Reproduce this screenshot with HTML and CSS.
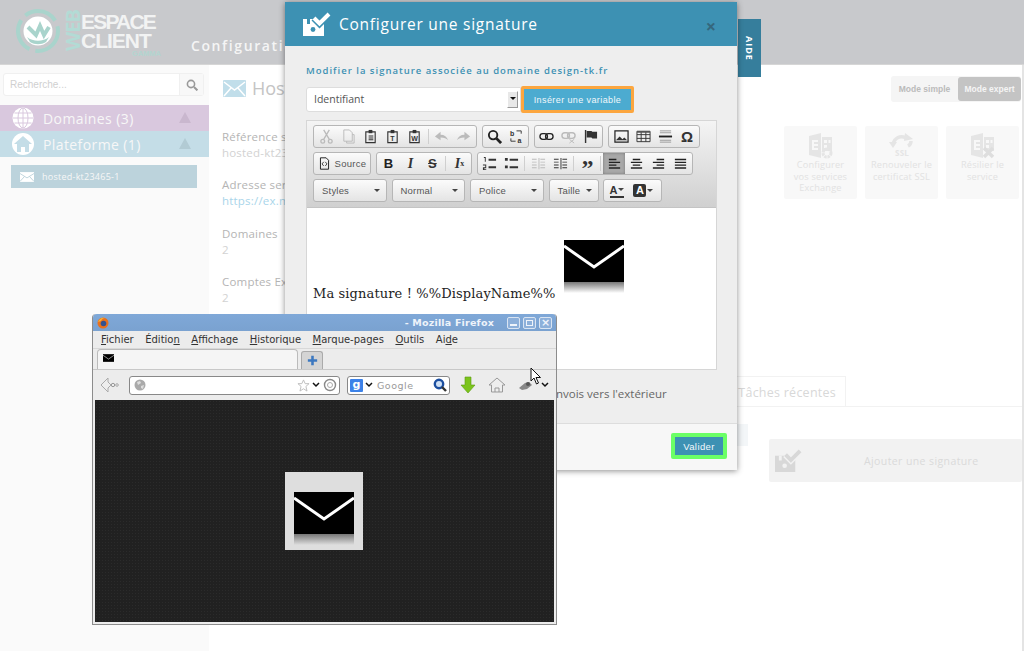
FILE: index.html
```html
<!DOCTYPE html>
<html lang="fr">
<head>
    <meta charset="UTF-8">
    <title>Espace Client</title>
    <link rel="stylesheet" href="styles.css">
</head>
<body>
    <!-- Icones reutilisees -->
    <svg class="sprite" width="0" height="0">
        <symbol id="i-mail" viewBox="0 0 60 42"><path fill="currentColor" d="M0 0h60v42H0z"/><path fill="none" stroke="#fff" stroke-width="3" d="M0 6l30 21L60 6"/></symbol>
        <symbol id="i-sign" viewBox="0 0 28 24"><path fill="currentColor" d="M0 7h17l4 4v13H0z"/><path fill="var(--hole,#fff)" d="M4 7h3v5H4z"/><circle cx="10" cy="17.500" r="2.400" fill="var(--hole,#fff)"/><path fill="none" stroke="var(--hole,#fff)" stroke-width="7" d="M11 6l5.500 5.500L26 2"/><path fill="none" stroke="currentColor" stroke-width="4" d="M11 6l5.500 5.500L26 2"/></symbol>
        <symbol id="i-clip" viewBox="0 0 16 16"><path fill="none" stroke="#333" stroke-width="1.200" d="M3 3h10v11.500H3z"/><path fill="#333" d="M6 1h4v3.500H6z"/></symbol>
        <symbol id="i-list" viewBox="0 0 16 16"><path fill="#333" d="M6 3h9v2H6zM6 11h9v2H6z"/><path fill="#333" d="M1 2h3v3H1zM1 10h3v3H1z"/></symbol>
        <symbol id="i-indent" viewBox="0 0 16 16"><path fill="currentColor" d="M1 3h5v1H1zM1 6h5v1H1zM1 9h5v1H1zM1 12h5v1H1zM10 3h5v1h-5zM10 6h5v1h-5zM10 9h5v1h-5zM10 12h5v1h-5zM8 2h1v12H8z"/></symbol>
        <symbol id="i-ex" viewBox="0 0 26 26"><path fill="currentColor" d="M1 3l12-3v25L1 22zM14 4h10v14H14z"/><path fill="#f8f8f8" d="M4 7h6v2H6v2h4v2H6v2h4v2H4zM16 7h3v3h-3zM20.500 7h2v3h-2zM16 12h3v3h-3z"/></symbol>
    </svg>

    <div class="page">
        <header class="topbar">
            <div class="logo">
                <svg width="46" height="46" viewBox="0 0 46 46">
                    <circle cx="23" cy="23" r="20" fill="none" stroke="#a9d4cc" stroke-width="4" stroke-dasharray="34 6"/>
                    <circle cx="23" cy="23" r="14.500" fill="#fff"/>
                    <path fill="none" stroke="#a9d4cc" stroke-width="4" d="M13 19l8 8 4-9 4 9 5-8"/>
                    <path fill="#a9d4cc" d="M12 29c6 5 16 5 22 0l-3 5c-5 3-11 3-16 0z"/>
                </svg>
                <span class="logo-web">WEB</span>
                <div class="logo-name">
                    <span class="logo-first">ESPACE</span>
                    <span>CLIENT</span>
                    <small>GAMMA</small>
                </div>
            </div>
            <div class="topbar-title">Configuration</div>
        </header>

        <div class="layout">
            <aside class="sidebar">
                <div class="search">
                    <span class="search-text">Recherche...</span>
                    <span class="search-btn">
                        <svg width="12" height="12" viewBox="0 0 12 12"><circle cx="5" cy="5" r="3.600" fill="none" stroke="#999" stroke-width="1.600"/><path stroke="#999" stroke-width="2" d="M8 8l3.400 3.400"/></svg>
                    </span>
                </div>
                <div class="nav-row nav-purple">
                    <svg width="22" height="22" viewBox="0 0 22 22"><circle cx="11" cy="11" r="10.500" fill="#fff"/><g fill="none" stroke="#d9c8de"><ellipse cx="11" cy="11" rx="5" ry="10"/><path d="M11 1v20M1 11h20M2.500 6h17M2.500 16h17"/></g></svg>
                    <span class="nav-label">Domaines (3)</span>
                    <span class="nav-arrow"></span>
                </div>
                <div class="nav-row nav-blue">
                    <svg width="22" height="22" viewBox="0 0 22 22"><circle cx="11" cy="11" r="11" fill="#fff"/><path fill="#c4dde7" d="M11 3L2 11h3v8h4v-5h4v5h4v-8h3z"/></svg>
                    <span class="nav-label">Plateforme (1)</span>
                    <span class="nav-arrow"></span>
                </div>
                <div class="nav-item">
                    <svg class="nav-item-icon" viewBox="0 0 60 42"><path fill="#fff" d="M0 0h60v42H0z"/><path fill="none" stroke="#bcd3dc" stroke-width="4" d="M0 6l30 19L60 6M0 40l20-22M60 40L40 18"/></svg>
                    hosted-kt23465-1
                </div>
            </aside>

            <main class="content">
                <section class="info">
                    <h2 class="info-title">
                        <svg class="info-icon" viewBox="0 0 23 17"><rect width="23" height="17" rx="1" fill="#c1deea"/><path fill="none" stroke="#fff" stroke-width="1.500" d="M1 2l10.500 8L22 2M1 16l7-8M22 16l-7-8"/></svg>
                        Hosted
                    </h2>
                    <dl class="info-list">
                        <dt>Référence service</dt>
                        <dd>hosted-kt23465-1</dd>
                        <dt>Adresse serveur</dt>
                        <dd class="info-link">https://ex.mail.fr</dd>
                        <dt>Domaines</dt>
                        <dd>2</dd>
                        <dt>Comptes Exchange</dt>
                        <dd>2</dd>
                    </dl>
                    <div class="info-row">
                        <span>Non</span>
                        <i class="info-dot"></i>
                    </div>
                </section>

                <section class="tools">
                    <div class="mode-switch">
                        <span class="mode">Mode simple</span>
                        <span class="mode mode-on">Mode expert</span>
                    </div>
                    <div class="tiles">
                        <div class="tile">
                            <svg class="tile-icon" viewBox="0 0 26 26"><use href="#i-ex"/><circle cx="19" cy="20" r="4" fill="none" stroke="#e5e5e5" stroke-width="3" stroke-dasharray="2.500 .7"/></svg>
                            Configurer<br>vos services<br>Exchange
                        </div>
                        <div class="tile">
                            <svg class="tile-icon" viewBox="0 0 26 26"><path fill="none" stroke="currentColor" stroke-width="3.500" d="M4 12C5 5 11 2 17 5M22 8c0 2-1 4-3 5"/><path fill="currentColor" d="M16 0l8 6-9 2zM0 9h8l-4 6z"/><text x="13" y="23" text-anchor="middle" class="tile-ssl">SSL</text></svg>
                            Renouveler le<br>certificat SSL
                        </div>
                        <div class="tile">
                            <svg class="tile-icon" viewBox="0 0 26 26"><use href="#i-ex"/><path stroke="#dedede" stroke-width="3.500" d="M14 15l9 9M23 15l-9 9"/></svg>
                            Résilier le<br>service
                        </div>
                    </div>
                    <div class="tabs"><span class="tab">Tâches récentes</span></div>
                    <div class="add-row">
                        <span class="add-stub"></span>
                        <div class="add-btn">
                            <svg class="add-icon"><use href="#i-sign"/></svg>
                            <span class="add-text">Ajouter une signature</span>
                        </div>
                    </div>
                </section>
            </main>
        </div>
    </div>

    <div class="aide"><span>AIDE</span></div>

    <!-- Fenetre de configuration -->
    <div class="modal">
        <div class="modal-head">
            <svg class="modal-icon"><use href="#i-sign"/></svg>
            <span class="modal-title">Configurer une signature</span>
            <span class="modal-close">×</span>
        </div>
        <div class="modal-body">
            <h4 class="modal-sub">Modifier la signature associée au domaine design-tk.fr</h4>
            <div class="var-row">
                <div class="select">Identifiant<span class="select-arrow"></span></div>
                <button class="btn btn-orange">Insérer une variable</button>
            </div>
            <div class="editor">
                <div class="toolbar">
                    <div class="tb-row">
                        <div class="tb-group tb-group-wide">
                            <span class="tb off"><svg viewBox="0 0 16 16"><circle cx="4" cy="13" r="2" fill="none" stroke="currentColor" stroke-width="1.400"/><circle cx="12" cy="13" r="2" fill="none" stroke="currentColor" stroke-width="1.400"/><path stroke="currentColor" stroke-width="1.400" d="M5 11l6-10M11 11L5 1"/></svg></span>
                            <span class="tb off"><svg viewBox="0 0 16 16"><path fill="none" stroke="currentColor" d="M3 1h6l3 3v9H3zM6 13v2h8V6h-2"/></svg></span>
                            <span class="tb"><svg viewBox="0 0 16 16"><use href="#i-clip"/><path fill="#333" d="M6 7h5v1H6zM6 9h5v1H6zM6 11h5v1H6z"/></svg></span>
                            <span class="tb"><svg viewBox="0 0 16 16"><use href="#i-clip"/><text x="8" y="13" text-anchor="middle" class="tb-mini">T</text></svg></span>
                            <span class="tb"><svg viewBox="0 0 16 16"><use href="#i-clip"/><text x="8" y="13" text-anchor="middle" class="tb-mini">W</text></svg></span>
                            <i class="tb-sep"></i>
                            <span class="tb off"><svg viewBox="0 0 16 16"><path fill="currentColor" d="M1 8l6-5v3c4 0 7 2 8 6-2-2-4-3-8-3v3z"/></svg></span>
                            <span class="tb off"><svg viewBox="0 0 16 16"><path fill="currentColor" d="M15 8L9 3v3C5 6 2 8 1 12c2-2 4-3 8-3v3z"/></svg></span>
                        </div>
                        <div class="tb-group tb-pad-half">
                            <span class="tb"><svg viewBox="0 0 16 16"><circle cx="6.500" cy="6.500" r="4.500" fill="none" stroke="#222" stroke-width="2"/><path stroke="#222" stroke-width="3" d="M10 10l5 5"/></svg></span>
                            <span class="tb"><svg viewBox="0 0 16 16"><text x="1" y="7" class="tb-mini">b</text><text x="9" y="15" class="tb-mini">a</text><path fill="none" stroke="#333" d="M8 2h5v3M7 13H2v-3"/></svg></span>
                        </div>
                        <div class="tb-group tb-pad-half">
                            <span class="tb"><svg viewBox="0 0 16 16"><rect x="1" y="5" width="8" height="6" rx="3" fill="none" stroke="#222" stroke-width="1.400"/><rect x="7" y="5" width="8" height="6" rx="3" fill="none" stroke="#222" stroke-width="1.400"/></svg></span>
                            <span class="tb off"><svg viewBox="0 0 16 16"><rect x="1" y="4" width="8" height="6" rx="3" fill="none" stroke="currentColor" stroke-width="1.500"/><rect x="7" y="4" width="8" height="6" rx="3" fill="none" stroke="currentColor" stroke-width="1.500"/><path stroke="currentColor" d="M9 11l5 4M14 11l-5 4"/></svg></span>
                            <span class="tb"><svg viewBox="0 0 16 16"><path fill="#333" d="M2 1h1.500v14H2zM4 2h5l1 1h5v7h-5l-1-1H4z"/></svg></span>
                        </div>
                        <div class="tb-group tb-pad-one">
                            <span class="tb"><svg viewBox="0 0 16 16"><path fill="none" stroke="#222" stroke-width="1.300" d="M1 2h14v12H1z"/><path fill="#333" d="M2 12l4-4 3 3 2-2 3 3z"/></svg></span>
                            <span class="tb"><svg viewBox="0 0 16 16"><path fill="none" stroke="#333" d="M1 2.500h14v11H1zM1 6h14M1 10h14M5.500 2.500v11M10.500 2.500v11"/><path fill="#555" d="M1 2h14v2H1z"/></svg></span>
                            <span class="tb"><svg viewBox="0 0 16 16"><path stroke="#999" d="M2 2h12M2 4h12M2 12h12M2 14h12"/><path stroke="#222" stroke-width="2" d="M1 8h14"/></svg></span>
                            <span class="tb tb-text tb-omega">Ω</span>
                        </div>
                    </div>
                    <div class="tb-row">
                        <div class="tb-group tb-pad-half">
                            <span class="tb tb-source"><svg viewBox="0 0 16 16"><path fill="none" stroke="#222" stroke-width="1.200" d="M3 1h7l3 3v11H3z"/><path fill="none" stroke="#222" d="M7 6L5 8.500 7 11M9 6l2 2.500L9 11"/></svg>Source</span>
                        </div>
                        <div class="tb-group tb-pad-half">
                            <span class="tb tb-text tb-b">B</span>
                            <span class="tb tb-text tb-i">I</span>
                            <span class="tb tb-text tb-s">S</span>
                            <i class="tb-sep"></i>
                            <span class="tb tb-text tb-i">I<sub>x</sub></span>
                        </div>
                        <div class="tb-group tb-pad-half">
                            <span class="tb"><svg viewBox="0 0 16 16"><path fill="#333" d="M7 3h8v2H7zM7 11h8v2H7zM2 1h2v5H3V2H2zM1 9h3.500v4H2.500v1h2v1H1v-3h2.500v-2H1z"/></svg></span>
                            <span class="tb"><svg><use href="#i-list"/></svg></span>
                            <i class="tb-sep"></i>
                            <span class="tb off"><svg><use href="#i-indent"/></svg></span>
                            <span class="tb"><svg><use href="#i-indent"/></svg></span>
                            <i class="tb-sep"></i>
                            <span class="tb tb-text tb-quote">”</span>
                            <i class="tb-sep"></i>
                            <span class="tb tb-on"><svg viewBox="0 0 16 16"><path fill="#222" d="M2 3h8v1.500H2zM2 6h12v1.500H2zM2 9h8v1.500H2zM2 12h12v1.500H2z"/></svg></span>
                            <span class="tb"><svg viewBox="0 0 16 16"><path fill="#222" d="M4 3h8v1.500H4zM2 6h12v1.500H2zM4 9h8v1.500H4zM2 12h12v1.500H2z"/></svg></span>
                            <span class="tb"><svg viewBox="0 0 16 16"><path fill="#222" d="M6 3h8v1.500H6zM2 6h12v1.500H2zM6 9h8v1.500H6zM2 12h12v1.500H2z"/></svg></span>
                            <span class="tb"><svg viewBox="0 0 16 16"><path fill="#222" d="M2 3h12v1.500H2zM2 6h12v1.500H2zM2 9h12v1.500H2zM2 12h12v1.500H2z"/></svg></span>
                        </div>
                    </div>
                    <div class="tb-row">
                        <div class="tb-combo tb-combo-lg">Styles<i class="caret"></i></div>
                        <div class="tb-combo tb-combo-lg">Normal<i class="caret"></i></div>
                        <div class="tb-combo tb-combo-lg">Police<i class="caret"></i></div>
                        <div class="tb-combo tb-combo-sm">Taille<i class="caret"></i></div>
                        <div class="tb-group tb-colors">
                            <span class="tb-color tb-color-a">A<i class="caret"></i></span>
                            <span class="tb-color"><b class="tb-color-box">A</b><i class="caret"></i></span>
                        </div>
                    </div>
                </div>
                <div class="editor-text">
                    <span>Ma signature ! %%DisplayName%%</span>
                    <div class="sig-img">
                        <svg class="sig-mail"><use href="#i-mail"/></svg>
                        <i class="sig-shadow"></i>
                    </div>
                </div>
            </div>
            <div class="check-row">Ajouter la signature aux envois vers l'extérieur</div>
        </div>
        <div class="modal-foot">
            <button class="btn btn-green">Valider</button>
        </div>
    </div>

    <!-- Fenetre Firefox -->
    <div class="ff">
        <div class="ff-title">
            <svg class="ff-logo" viewBox="0 0 12 12"><circle cx="6" cy="6" r="5.500" fill="#e8701e"/><circle cx="6.500" cy="6.500" r="2.800" fill="#33518f"/><path fill="#f3b23c" d="M1 5c1-3 4-5 7-4-2 0-3 1-4 3z"/></svg>
            <span class="ff-name">- Mozilla Firefox</span>
            <div class="ff-btns">
                <span class="ff-btn"><i class="ff-min"></i></span>
                <span class="ff-btn"><i class="ff-max"></i></span>
                <span class="ff-btn ff-x">×</span>
            </div>
        </div>
        <div class="ff-menu">
            <span><u>F</u>ichier</span>
            <span>Éditio<u>n</u></span>
            <span><u>A</u>ffichage</span>
            <span><u>H</u>istorique</span>
            <span><u>M</u>arque-pages</span>
            <span><u>O</u>utils</span>
            <span>Ai<u>d</u>e</span>
        </div>
        <div class="ff-tabs">
            <div class="ff-tab"><svg class="ff-fav"><use href="#i-mail"/></svg></div>
            <div class="ff-new"><svg width="11" height="11" viewBox="0 0 13 13"><path fill="#3c78c0" d="M5 1h3v4h4v3H8v4H5V8H1V5h4z"/></svg></div>
        </div>
        <div class="ff-nav">
            <svg class="ff-back" viewBox="0 0 19 16"><path fill="#eee" stroke="#aaa" d="M8 1L1 8l7 7v-4l3-3-3-3z"/><circle cx="13" cy="8" r="1.700" fill="none" stroke="#999"/><circle cx="17" cy="8" r="1.300" fill="none" stroke="#aaa"/></svg>
            <div class="ff-url">
                <svg class="ff-globe" viewBox="0 0 12 12"><circle cx="6" cy="6" r="5.500" fill="#aaa"/><path fill="#ddd" d="M3 3l3-1 1 2-3 2zM7 7l3-1-1 4-2-1z"/></svg>
                <span class="ff-grow"></span>
                <svg class="ff-star" viewBox="0 0 14 14"><path fill="#fff" stroke="#bbb" d="M7 1l1.800 4H13l-3.400 3 1.200 5L7 10.500 3.200 13l1.200-5L1 5h4.200z"/></svg>
                <svg class="ff-chev" viewBox="0 0 8 6"><path fill="none" stroke="#111" stroke-width="1.500" d="M1 1l3 3 3-3"/></svg>
                <svg class="ff-reload" viewBox="0 0 14 14"><circle cx="7" cy="7" r="5.500" fill="none" stroke="#888" stroke-width="1.400"/><circle cx="7" cy="7" r="2.500" fill="none" stroke="#aaa"/></svg>
            </div>
            <div class="ff-search">
                <span class="ff-g">g</span>
                <svg class="ff-chev" viewBox="0 0 8 6"><path fill="none" stroke="#111" stroke-width="1.500" d="M1 1l3 3 3-3"/></svg>
                <span class="ff-search-text">Google</span>
                <svg class="ff-lens" viewBox="0 0 14 14"><circle cx="6" cy="6" r="4.200" fill="#cfe0f5" stroke="#1c4fa0" stroke-width="2.400"/><path stroke="#333" stroke-width="2.400" d="M9 9l4 4"/></svg>
            </div>
            <svg class="ff-down" viewBox="0 0 16 18"><path fill="#7cc41c" stroke="#5a9c10" stroke-width=".6" d="M5 1h6v8h4l-7 8-7-8h4z"/></svg>
            <svg class="ff-home" viewBox="0 0 18 16"><path fill="#eee" stroke="#999" d="M9 1L1 8h2.500v7h11V8H17z"/><path fill="none" stroke="#999" d="M7 15v-4h4v4"/></svg>
            <svg class="ff-tools" viewBox="0 0 32 12"><path fill="#888" d="M1 9l6-5 4-1 3 3-5 4-5 1z"/><circle cx="10" cy="5" r="2" fill="#555"/><path fill="none" stroke="#111" stroke-width="1.500" d="M24 4l3 3 3-3"/></svg>
        </div>
        <div class="ff-view">
            <div class="ff-img">
                <svg class="sig-mail"><use href="#i-mail"/></svg>
                <i class="sig-shadow"></i>
            </div>
        </div>
    </div>

    <svg class="cursor" viewBox="0 0 12 18"><path fill="#fff" stroke="#111" d="M1 1v13l3-3 2.500 6 2-1-2.500-5.500h4.500z"/></svg>
</body>
</html>
```

FILE: styles.css
```css
* {
    margin: 0;
    padding: 0;
    box-sizing: border-box;
}

body {
    font-family: "Open Sans", sans-serif;
    background-color: #ffffff;
    width: 1024px;
    height: 651px;
    overflow: hidden;
    position: relative;
}

.sprite {
    position: absolute;
}

.page {
    height: 651px;
    display: flex;
    flex-direction: column;
    border-right: 2px solid #e4e4e4;
}

/* Bandeau du haut */
.topbar {
    height: 65px;
    flex: none;
    background-color: #c8c9cc;
    border-bottom: 1px solid #d6d6d6;
    display: flex;
    padding: 8px 0 0 15px;
    margin-right: -2px;
}

.logo {
    width: 176px;
    display: flex;
    color: #f2f3f3;
}

.logo-web {
    writing-mode: vertical-rl;
    transform: rotate(180deg);
    font-size: 20px;
    line-height: 18px;
    font-weight: 700;
    color: #b3dbd5;
    height: 38px;
    margin: 5px 0 0 3px;
    letter-spacing: -1px;
    text-align: center;
}

.logo-name {
    display: flex;
    flex-direction: column;
    font-family: "Liberation Sans", sans-serif;
    font-weight: 700;
    font-size: 21px;
    line-height: 19px;
    letter-spacing: -1px;
    margin: 4px 0 0 -1px;
}

.logo-first {
    letter-spacing: -1.800px;
}

.logo-name small {
    font-size: 7.500px;
    line-height: 8px;
    letter-spacing: 0;
    color: #b3d5d0;
    text-align: right;
    margin-right: -6px;
}

.topbar-title {
    align-self: flex-end;
    font-size: 14px;
    font-weight: 600;
    letter-spacing: 1.600px;
    color: #f5f5f5;
    padding-bottom: 9px;
}

.layout {
    flex: 1;
    display: flex;
    min-height: 0;
}

/* Colonne de gauche */
.sidebar {
    width: 209px;
    flex: none;
    background-color: #fafafa;
    padding-top: 8px;
}

.search {
    display: flex;
    height: 23px;
    margin: 0 5px 9px 3px;
    background-color: #ffffff;
    border: 1px solid #f0f0f0;
    border-radius: 3px;
}

.search-text {
    flex: 1;
    font-size: 10px;
    line-height: 21px;
    padding-left: 6px;
    color: #d0d0d0;
    font-family: "Liberation Sans", sans-serif;
}

.search-btn {
    width: 24px;
    background-color: #f8f8f8;
    border-left: 1px solid #f0f0f0;
    display: flex;
    align-items: center;
    justify-content: center;
}

.nav-row {
    height: 26px;
    display: flex;
    align-items: center;
    padding: 0 18px 0 12px;
    color: #f7f7f7;
    font-size: 14px;
    letter-spacing: .4px;
}

.nav-purple {
    background-color: #d9c8de;
}

.nav-blue {
    background-color: #c4dde7;
}

.nav-label {
    flex: 1;
    margin-left: 9px;
}

.nav-arrow {
    border: 6px solid transparent;
    border-top-width: 0;
    border-bottom: 11px solid #c9b7ce;
    margin-top: -2px;
}

.nav-blue .nav-arrow {
    border-bottom-color: #b2cbd4;
}

.nav-item {
    height: 23px;
    margin: 8px 12px 0 11px;
    background-color: #bcd3dc;
    color: #f7f7f7;
    font-size: 9px;
    letter-spacing: .25px;
    display: flex;
    align-items: center;
    gap: 8px;
    padding-left: 9px;
}

.nav-item-icon {
    width: 14px;
    height: 10px;
}

/* Contenu principal */
.content {
    flex: 1;
    display: flex;
    min-width: 0;
}

.info {
    width: 528px;
    flex: none;
    padding: 13px 0 0 13px;
    overflow: hidden;
    white-space: nowrap;
}

.info-title {
    font-size: 18px;
    font-weight: 400;
    color: #c4c4c4;
    display: flex;
    align-items: center;
    gap: 6px;
    height: 20px;
    margin-left: 1px;
}

.info-icon {
    width: 23px;
    height: 17px;
}

.info-list {
    margin-top: 31px;
    font-size: 11.500px;
    line-height: 16px;
    letter-spacing: .2px;
}

.info-list dt {
    color: #b4b4b4;
}

.info-list dd {
    color: #d2d2d2;
    margin-bottom: 16.300px;
}

.info-list .info-link {
    color: #a9d5ea;
}

.info-row {
    margin-top: 143px;
    padding-left: 366px;
    display: flex;
    align-items: center;
    width: 515px;
    font-size: 9px;
    color: #ccc;
}

.info-row span {
    flex: 1;
}

.info-dot {
    width: 3px;
    height: 8px;
    margin-right: 1px;
    background-color: #a9cfe0;
}

.tools {
    flex: 1;
    min-width: 0;
    display: flex;
    flex-direction: column;
}

.mode-switch {
    align-self: flex-end;
    width: 130px;
    height: 26px;
    margin: 11px 1px 0 0;
    background-color: #f5f5f5;
    border-radius: 3px;
    display: flex;
    align-items: center;
    font-family: "Liberation Sans", sans-serif;
    font-size: 8.500px;
    font-weight: 700;
}

.mode {
    flex: 1;
    text-align: center;
    color: #bbb;
}

.mode-on {
    flex: none;
    width: 63px;
    height: 24px;
    line-height: 24px;
    background-color: #c4c4c4;
    color: #f5f5f5;
    border-radius: 3px;
}

.tiles {
    display: flex;
    gap: 8px;
    margin: 24px 0 0 47px;
}

.tile {
    width: 73px;
    height: 73px;
    background-color: #f8f8f8;
    border-radius: 2px;
    color: #e2e2e2;
    font-size: 9.200px;
    line-height: 11.500px;
    letter-spacing: .2px;
    text-align: center;
    padding: 7px 3px 0;
}

.tile-icon {
    display: block;
    width: 26px;
    height: 26px;
    margin: 0 auto;
    color: #e5e5e5;
}

.tile-ssl {
    font-size: 8px;
    font-weight: 700;
    fill: #e5e5e5;
}

.tabs {
    margin-top: 177px;
    height: 31px;
    border-bottom: 1px solid #f2f2f2;
}

.tab {
    display: block;
    width: 109px;
    height: 30px;
    border: 1px solid #f2f2f2;
    border-bottom: 0;
    border-left: 0;
    color: #d8d8d8;
    font-size: 12.500px;
    line-height: 32px;
    letter-spacing: .25px;
    text-align: right;
    padding-right: 9px;
    white-space: nowrap;
}

.add-row {
    display: flex;
    gap: 21px;
    margin-top: 17px;
}

.add-stub {
    width: 11px;
    height: 22px;
    background-color: #f3f6f8;
}

.add-btn {
    flex: 1;
    height: 43px;
    margin-top: 15px;
    background-color: #f2f2f2;
    border-radius: 2px;
    display: flex;
    align-items: center;
    padding-left: 6px;
}

.add-icon {
    width: 27px;
    height: 25px;
    color: #d8d8d8;
    --hole: #f2f2f2;
}

.add-text {
    margin-left: 62px;
    font-size: 10.500px;
    letter-spacing: .4px;
    color: #dadada;
}

/* Onglet lateral */
.aide {
    position: absolute;
    left: 738px;
    top: 19px;
    width: 23px;
    height: 58px;
    background-color: #367e9c;
    color: #ffffff;
    display: flex;
    align-items: center;
    justify-content: center;
}

.aide span {
    writing-mode: vertical-rl;
    font-size: 9px;
    font-weight: 700;
    letter-spacing: 1px;
}

/* Fenetre de configuration */
.modal {
    position: absolute;
    left: 285px;
    top: 2px;
    width: 452px;
    height: 468px;
    background-color: #eeeeee;
    box-shadow: 0 1px 6px rgba(0, 0, 0, .45);
    display: flex;
    flex-direction: column;
}

.modal-head {
    height: 44px;
    flex: none;
    background-color: #3d91b3;
    color: #ffffff;
    display: flex;
    align-items: center;
    padding: 0 21px 0 18px;
    --hole: #3d91b3;
}

.modal-icon {
    width: 28px;
    height: 24px;
}

.modal-title {
    flex: 1;
    margin-left: 8px;
    font-size: 15.500px;
    font-weight: 400;
    letter-spacing: .75px;
}

.modal-close {
    font-size: 18px;
    font-weight: 700;
    color: #35677d;
    margin-top: 3px;
}

.modal-body {
    flex: 1;
    padding: 18px 20px 0 21px;
}

.modal-sub {
    font-size: 9.500px;
    line-height: 14px;
    letter-spacing: 1px;
    font-weight: 600;
    color: #3d91b3;
}

.var-row {
    display: flex;
    margin-top: 8px;
    height: 27px;
    align-items: center;
}

.select {
    width: 215px;
    height: 25px;
    background-color: #ffffff;
    border: 1px solid #dddddd;
    border-radius: 3px 0 0 3px;
    font-size: 10.500px;
    line-height: 23px;
    padding-left: 7px;
    color: #555555;
    position: relative;
}

.select-arrow {
    position: absolute;
    right: 2px;
    top: 3px;
    width: 11px;
    height: 17px;
    background-color: #e8e8e8;
    border: 1px solid #999;
    border-top-color: #fff;
    border-left-color: #fff;
}

.select-arrow::after {
    content: "";
    position: absolute;
    left: 2px;
    top: 5px;
    border: 3px solid transparent;
    border-top-color: #111;
}

.btn {
    font-family: "Liberation Sans", sans-serif;
    font-size: 9px;
    letter-spacing: .4px;
    color: #f2f8fb;
    cursor: pointer;
    border-radius: 2px;
}

.btn-orange {
    width: 113px;
    height: 27px;
    background-color: #4cabd0;
    border: 3px solid #fca63f;
}

.editor {
    margin-top: 7px;
    width: 411px;
    height: 250px;
    border: 1px solid #d6d6d6;
    background-color: #ffffff;
    display: flex;
    flex-direction: column;
}

.toolbar {
    height: 87px;
    flex: none;
    background: linear-gradient(#f4f4f4, #d0d0d0);
    border-bottom: 1px solid #c4c4c4;
    padding: 4px 0 0 6px;
    display: flex;
    flex-direction: column;
    gap: 4px;
}

.tb-row {
    display: flex;
    gap: 5px;
    height: 23px;
}

.tb-group {
    display: flex;
    align-items: center;
    height: 23px;
    background: linear-gradient(#fbfbfb, #e4e4e4);
    border: 1px solid #b6b6b6;
    border-radius: 3px;
}

.tb-group-wide {
    padding: 0 1.500px;
}

.tb-pad-half {
    padding: 0 .5px;
}

.tb-pad-one {
    padding: 0 1px;
}

.tb {
    width: 22px;
    height: 21px;
    display: flex;
    align-items: center;
    justify-content: center;
    color: #333333;
}

.tb svg {
    width: 15px;
    height: 15px;
}

.tb.off {
    color: #bbbbbb;
}

.tb-mini {
    font-family: "Liberation Sans", sans-serif;
    font-size: 7.500px;
    font-weight: 700;
    fill: #333;
}

.tb-sep {
    width: 1px;
    height: 15px;
    margin: 0 2px;
    background-color: #cfcfcf;
}

.tb-on {
    background-color: #a8a8a8;
    box-shadow: inset 0 0 3px #777;
}

.tb-text {
    font-family: "Liberation Sans", sans-serif;
    font-size: 13px;
}

.tb-b {
    font-weight: 700;
    color: #222;
}

.tb-i {
    font-weight: 700;
    font-style: italic;
    font-family: "Liberation Serif", serif;
    font-size: 14px;
}

.tb-i sub {
    font-size: 8px;
    font-style: normal;
}

.tb-s {
    font-weight: 700;
    text-decoration: line-through;
}

.tb-quote {
    font-family: "Liberation Serif", serif;
    font-size: 24px;
    font-weight: 700;
    line-height: 30px;
    padding-top: 8px;
}

.tb-omega {
    font-size: 15px;
    font-weight: 700;
}

.tb-source {
    width: auto;
    gap: 4px;
    padding: 0 3px;
    font-family: "Liberation Sans", sans-serif;
    font-size: 9.500px;
    letter-spacing: .3px;
    color: #555;
}

.tb-source svg {
    width: 13px;
    height: 13px;
}

.tb-combo {
    height: 23px;
    background: linear-gradient(#fbfbfb, #e4e4e4);
    border: 1px solid #b6b6b6;
    border-radius: 3px;
    font-family: "Liberation Sans", sans-serif;
    font-size: 9.500px;
    letter-spacing: .2px;
    color: #555;
    display: flex;
    align-items: center;
    justify-content: space-between;
    padding: 0 6px 0 8px;
}

.tb-combo-lg {
    width: 73.500px;
}

.tb-combo-sm {
    width: 50px;
}

.caret {
    border: 3px solid transparent;
    border-top-color: #444;
    margin-top: 3px;
}

.tb-colors {
    width: 59px;
    padding: 0 6px;
    gap: 9px;
    margin-left: -1px;
}

.tb-color {
    display: flex;
    align-items: center;
    gap: 1px;
    font-family: "Liberation Sans", sans-serif;
    font-size: 11px;
    font-weight: 700;
    color: #333;
}

.tb-color-a {
    border-bottom: 2px solid #333;
    line-height: 12px;
}

.tb-color-box {
    background-color: #333;
    color: #ffffff;
    border-radius: 2px;
    width: 13px;
    line-height: 13px;
    text-align: center;
}

.editor-text {
    flex: 1;
    display: flex;
    align-items: flex-start;
    padding: 32px 0 0 6px;
    gap: 9px;
}

.editor-text span {
    font-family: "DejaVu Serif", serif;
    font-size: 13px;
    line-height: 18px;
    letter-spacing: .12px;
    color: #222222;
    margin-top: 45px;
}

.sig-img {
    width: 60px;
}

.sig-mail {
    display: block;
    width: 60px;
    height: 42px;
    color: #000000;
}

.sig-shadow {
    display: block;
    height: 11px;
    background: linear-gradient(#777, rgba(200, 200, 200, 0));
}

.check-row {
    margin-top: 16px;
    font-size: 11.500px;
    line-height: 16px;
    color: #666666;
    padding-left: 113px;
}

.modal-foot {
    height: 47px;
    flex: none;
    background-color: #f7f7f7;
    border-top: 1px solid #dddddd;
    padding: 9px 10px 0 0;
    display: flex;
    justify-content: flex-end;
    align-items: flex-start;
}

.btn-green {
    width: 56px;
    height: 26px;
    background-color: #3d91b3;
    border: 4px solid #6bff66;
    font-size: 9.500px;
}

/* Fenetre Firefox */
.ff {
    position: absolute;
    left: 92px;
    top: 314px;
    width: 465px;
    height: 311px;
    background-color: #ececec;
    border: 1px solid #8c8c8c;
    border-top: 0;
    border-radius: 4px 4px 0 0;
    display: flex;
    flex-direction: column;
    font-family: "DejaVu Sans", sans-serif;
    color: #333;
}

.ff-title {
    height: 17px;
    flex: none;
    background: linear-gradient(#7fa8d8, #7aa2d0);
    border-radius: 4px 4px 0 0;
    display: flex;
    align-items: center;
    padding: 0 4px 0 4px;
}

.ff-logo {
    width: 12px;
    height: 12px;
}

.ff-name {
    flex: 1;
    text-align: right;
    padding-right: 13px;
    font-size: 9.500px;
    font-weight: 700;
    letter-spacing: .2px;
    color: #eef3fa;
}

.ff-btns {
    display: flex;
    gap: 3px;
}

.ff-btn {
    width: 13px;
    height: 12px;
    border: 1px solid #d9e4f2;
    border-radius: 2px;
    background-color: #8db0da;
    display: flex;
    align-items: center;
    justify-content: center;
}

.ff-min {
    width: 7px;
    height: 2px;
    background-color: #eef3fa;
    margin-top: 5px;
}

.ff-max {
    width: 7px;
    height: 6px;
    border: 1px solid #eef3fa;
}

.ff-x {
    font-size: 11px;
    line-height: 10px;
    color: #eef3fa;
    font-weight: 700;
}

.ff-menu {
    height: 18px;
    flex: none;
    border-bottom: 1px solid #d8d8d8;
    display: flex;
    align-items: center;
    padding-left: 8px;
    gap: 11.500px;
    font-size: 10px;
}

.ff-tabs {
    height: 21px;
    flex: none;
    display: flex;
    align-items: flex-end;
    padding-left: 4px;
    border-bottom: 1px solid #c8c8c8;
    gap: 3px;
}

.ff-tab {
    width: 201px;
    height: 20px;
    background-color: #f5f5f5;
    border: 1px solid #bbb;
    border-bottom: 0;
    border-radius: 4px 4px 0 0;
    padding: 4px 0 0 5px;
}

.ff-fav {
    display: block;
    width: 11px;
    height: 8px;
    color: #000;
}

.ff-new {
    width: 22px;
    height: 18px;
    background-color: #d4d4d4;
    border: 1px solid #aaa;
    border-bottom: 0;
    border-radius: 3px 3px 0 0;
    display: flex;
    align-items: center;
    justify-content: center;
}

.ff-nav {
    height: 30px;
    flex: none;
    display: flex;
    align-items: center;
    padding: 0 6px 0 7px;
}

.ff-back {
    width: 19px;
    height: 16px;
    margin-right: 10px;
}

.ff-url,
.ff-search {
    height: 19px;
    background-color: #ffffff;
    border: 1px solid #888;
    border-radius: 3px;
    display: flex;
    align-items: center;
}

.ff-url {
    width: 211px;
    padding: 0 2px 0 4px;
}

.ff-globe {
    width: 12px;
    height: 12px;
}

.ff-grow {
    flex: 1;
}

.ff-star {
    width: 13px;
    height: 13px;
    margin-right: 2px;
}

.ff-chev {
    width: 8px;
    height: 6px;
    margin-right: 3px;
}

.ff-reload {
    width: 14px;
    height: 14px;
}

.ff-search {
    width: 103px;
    margin-left: 7px;
    padding: 0 2px 0 2px;
}

.ff-g {
    width: 13px;
    height: 13px;
    background-color: #3c82e8;
    color: #ffffff;
    font-size: 11px;
    line-height: 11px;
    font-weight: 700;
    text-align: center;
    border-radius: 1px;
    margin-right: 2px;
}

.ff-search-text {
    flex: 1;
    font-size: 9.500px;
    letter-spacing: .5px;
    color: #999;
    margin-left: 1px;
}

.ff-lens {
    width: 14px;
    height: 14px;
}

.ff-down {
    width: 16px;
    height: 18px;
    margin-left: 10px;
}

.ff-home {
    width: 18px;
    height: 16px;
    margin-left: 12px;
}

.ff-tools {
    width: 32px;
    height: 12px;
    margin-left: 12px;
}

.ff-view {
    flex: 1;
    margin: 0 2px 2px;
    background-color: #212121;
    background-image: radial-gradient(#2b2b2b .6px, transparent 1px);
    background-size: 3px 3px;
    display: flex;
    align-items: center;
    justify-content: center;
}

.ff-img {
    width: 78px;
    height: 78px;
    background-color: #dedede;
    padding: 20px 9px 0;
    margin-top: -1px;
    margin-left: -2px;
}

/* Curseur */
.cursor {
    position: absolute;
    left: 530px;
    top: 367px;
    width: 12px;
    height: 18px;
}
```
